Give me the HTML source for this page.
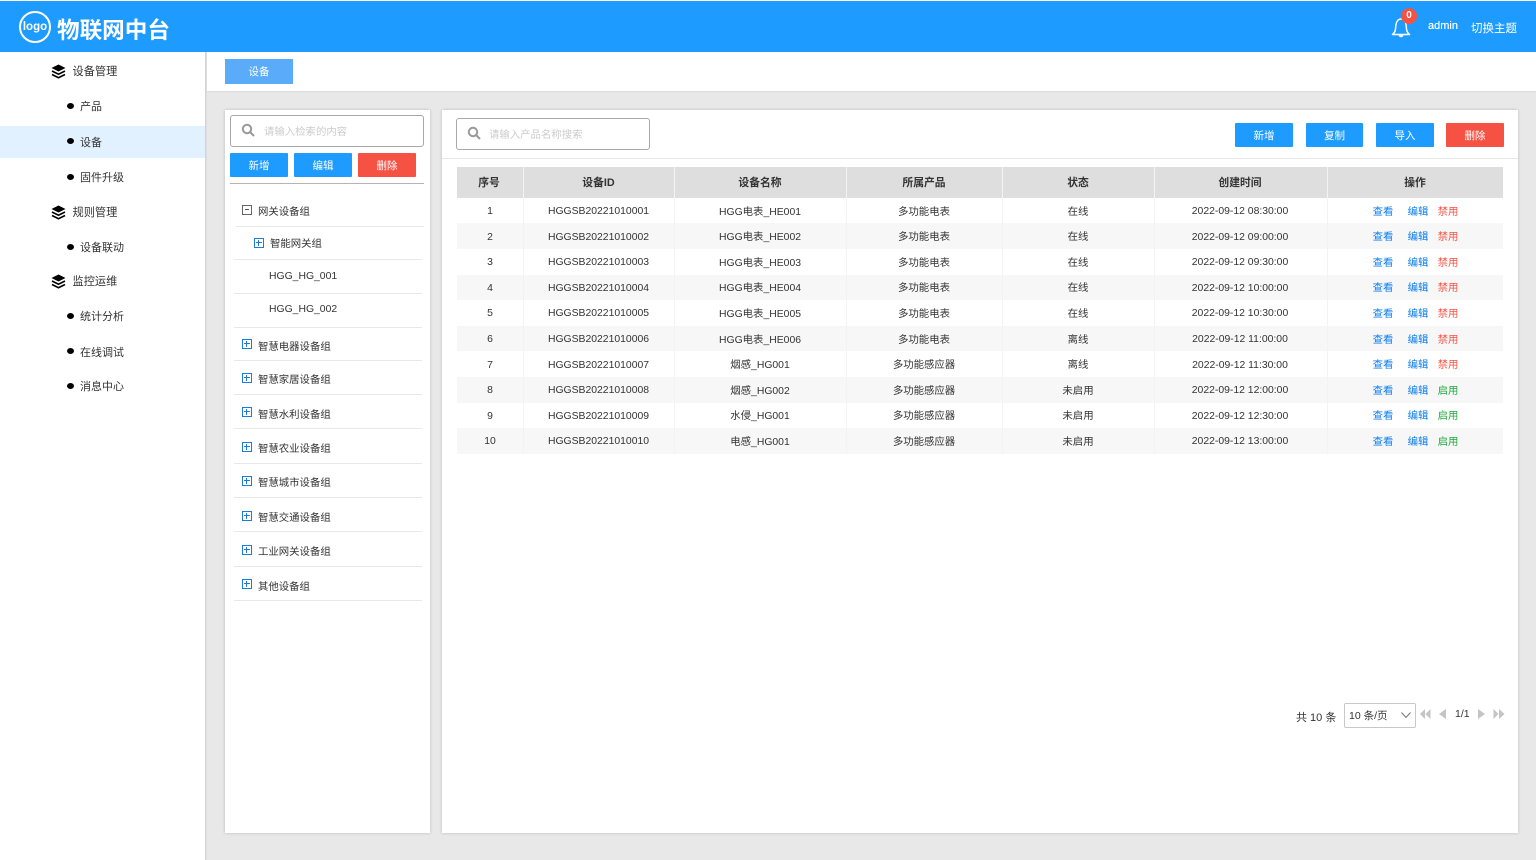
<!DOCTYPE html>
<html lang="zh">
<head>
<meta charset="utf-8">
<style>
*{box-sizing:border-box;margin:0;padding:0}
html,body{width:1536px;height:860px;overflow:hidden;background:#e8e8e8;font-family:"Liberation Sans","Noto Sans CJK SC",sans-serif;color:#333}
.a{position:absolute;white-space:nowrap}
.t{position:absolute;white-space:nowrap;font-size:11px;line-height:14px;color:#333}
.tr{position:absolute;white-space:nowrap;font-size:10.4px;line-height:14px;color:#333;margin-top:1px}
.c{position:absolute;white-space:nowrap;font-size:10.4px;line-height:14px;color:#333;text-align:center;transform:translateX(-50%);margin-top:1px}
.btn{position:absolute;height:24px;line-height:26px;text-align:center;color:#fff;font-size:10.500px;background:#1e9bff;border-radius:1px}
.red{background:#f55243}
.search{position:absolute;height:32px;background:#fff;border:1px solid #a8a8a8;border-radius:3px}
.ph{position:absolute;font-size:10.400px;line-height:14px;color:#ccc;white-space:nowrap;margin-top:1px}
.dot{position:absolute;width:7px;height:6px;border-radius:50%;background:#000}
.line{position:absolute;height:1px;background:#e8e8e8}
.box{position:absolute;width:10px;height:10px;border:1px solid #1e7bdc}
.box:before{content:"";position:absolute;left:1px;right:1px;top:3px;height:1px;background:#1e7bdc}
.box:after{content:"";position:absolute;top:1px;bottom:1px;left:3px;width:1px;background:#1e7bdc}
.row{position:absolute;left:457px;width:1046px}
.hd{position:absolute;top:167px;height:31px;background:#dedede}
.hc{position:absolute;font-size:10.800px;font-weight:bold;line-height:14px;top:176px;color:#333;transform:translateX(-50%);white-space:nowrap}
.vl{position:absolute;width:1px;background:#f3f3f3}
.bl{color:#0a7df0}.rd{color:#f55243}.gr{color:#1fa83c}
</style>
</head>
<body>
<!-- header -->
<div class="a" style="left:0;top:1px;width:1536px;height:51px;background:#1e9bff"></div>
<div class="a" style="left:0;top:0;width:1536px;height:1px;background:#fff"></div>
<div class="a" style="left:19px;top:11px;width:32px;height:32px;border:2px solid #fff;border-radius:50%;color:#fff;font-size:11.500px;font-weight:bold;line-height:28px;text-align:center">logo</div>
<div class="a" style="left:57px;top:16px;font-size:22.600px;line-height:30px;font-weight:bold;color:#fff">物联网中台</div>
<svg class="a" style="left:1390px;top:15px" width="24" height="24" viewBox="0 0 24 24" fill="none" stroke="#fff" stroke-width="1.500"><path d="M2.500 19.500c2.500-2 3-4 3.200-7.500C6 7 8 4 11 4s5 3 5.300 8c.2 3.500.7 5.500 3.200 7.500z" stroke-linejoin="round"/><path d="M8.500 20.300h5c-.4 2.600-4.600 2.600-5 0z" fill="#fff" stroke="none"/></svg>
<div class="a" style="left:1401px;top:8px;width:16px;height:16px;border-radius:50%;background:#f55243;color:#fff;font-size:10px;font-weight:bold;line-height:16px;text-align:center">0</div>
<div class="a" style="left:1428px;top:19px;font-size:11px;line-height:14px;color:#fff;font-weight:500;text-shadow:0 0 .4px #fff">admin</div>
<div class="a" style="left:1471px;top:22px;font-size:11.500px;line-height:14px;color:#fff">切换主题</div>

<!-- sidebar -->
<div class="a" style="left:0;top:52px;width:205px;height:808px;background:#fff"></div>
<div class="a" style="left:205px;top:52px;width:2px;height:808px;background:linear-gradient(to right,#cfcfcf,#e4e4e4)"></div>
<div class="a" style="left:0;top:126px;width:205px;height:32px;background:#e1f1ff"></div>
<svg class="a" style="left:51px;top:64px" width="15" height="15" viewBox="0 0 15 15"><path d="M7.500 0.500L14.500 4 7.500 7.500 .5 4z" fill="#000"/><path d="M1 7l6.500 3.200L14 7M1 10.500l6.500 3.200 6.500-3.200" fill="none" stroke="#000" stroke-width="1.600"/></svg>
<svg class="a" style="left:51px;top:205px" width="15" height="15" viewBox="0 0 15 15"><path d="M7.500 0.500L14.500 4 7.500 7.500 .5 4z" fill="#000"/><path d="M1 7l6.500 3.200L14 7M1 10.500l6.500 3.200 6.500-3.200" fill="none" stroke="#000" stroke-width="1.600"/></svg>
<svg class="a" style="left:51px;top:274px" width="15" height="15" viewBox="0 0 15 15"><path d="M7.500 0.500L14.500 4 7.500 7.500 .5 4z" fill="#000"/><path d="M1 7l6.500 3.200L14 7M1 10.500l6.500 3.200 6.500-3.200" fill="none" stroke="#000" stroke-width="1.600"/></svg>
<div class="t" style="left:72.500px;top:65px;font-size:11.200px">设备管理</div>
<div class="dot" style="left:67px;top:103px"></div><div class="t" style="left:80px;top:100px">产品</div>
<div class="dot" style="left:67px;top:138px"></div><div class="t" style="left:80px;top:136px">设备</div>
<div class="dot" style="left:67px;top:174px"></div><div class="t" style="left:80px;top:171px">固件升级</div>
<div class="t" style="left:72.500px;top:206px;font-size:11.200px">规则管理</div>
<div class="dot" style="left:67px;top:244px"></div><div class="t" style="left:80px;top:241px">设备联动</div>
<div class="t" style="left:72.500px;top:275px;font-size:11.200px">监控运维</div>
<div class="dot" style="left:67px;top:313px"></div><div class="t" style="left:80px;top:310px">统计分析</div>
<div class="dot" style="left:67px;top:348px"></div><div class="t" style="left:80px;top:346px">在线调试</div>
<div class="dot" style="left:67px;top:383px"></div><div class="t" style="left:80px;top:380px">消息中心</div>

<!-- tab bar -->
<div class="a" style="left:207px;top:52px;width:1329px;height:39px;background:#fff;box-shadow:0 1px 1px rgba(0,0,0,.06)"></div>
<div class="a" style="left:225px;top:59px;width:68px;height:25px;background:#5aacfb;color:#fff;font-size:10.500px;line-height:27px;text-align:center">设备</div>

<!-- left panel -->
<div class="a" style="left:225px;top:110px;width:205px;height:723px;background:#fff;box-shadow:0 0 3px rgba(0,0,0,.2)"></div>
<div class="search" style="left:230px;top:115px;width:194px"></div>
<svg class="a" style="left:241px;top:123px" width="14" height="14" viewBox="0 0 14 14" fill="none" stroke="#999" stroke-width="2"><circle cx="6" cy="6" r="4.200"/><path d="M9 9l4 4"/></svg>
<div class="ph" style="left:264px;top:125px">请输入检索的内容</div>
<div class="btn" style="left:230px;top:153px;width:58px;line-height:27px">新增</div>
<div class="btn" style="left:294px;top:153px;width:58px;line-height:27px">编辑</div>
<div class="btn red" style="left:358px;top:153px;width:58px;line-height:27px">删除</div>
<div class="line" style="left:230px;top:183px;width:194px;background:#b4b4b4"></div>

<div class="a" style="left:242px;top:205px;width:10px;height:10px;border:1px solid #666"><div class="a" style="left:2px;top:3px;width:4px;height:1px;background:#555"></div></div>
<div class="tr" style="left:258px;top:205px">网关设备组</div>
<div class="line" style="left:236px;top:226px;width:188px"></div>
<div class="box" style="left:254px;top:238px"></div>
<div class="tr" style="left:270px;top:237px">智能网关组</div>
<div class="line" style="left:234px;top:259px;width:188px"></div>
<div class="tr" style="left:269px;top:269px">HGG_HG_001</div>
<div class="line" style="left:234px;top:293px;width:188px"></div>
<div class="tr" style="left:269px;top:302px">HGG_HG_002</div>
<div class="line" style="left:234px;top:327px;width:188px"></div>
<div class="box" style="left:242px;top:339px"></div><div class="tr" style="left:258px;top:340px">智慧电器设备组</div>
<div class="line" style="left:234px;top:360px;width:188px"></div>
<div class="box" style="left:242px;top:373px"></div><div class="tr" style="left:258px;top:373px">智慧家居设备组</div>
<div class="line" style="left:234px;top:394px;width:188px"></div>
<div class="box" style="left:242px;top:407px"></div><div class="tr" style="left:258px;top:408px">智慧水利设备组</div>
<div class="line" style="left:234px;top:428px;width:188px"></div>
<div class="box" style="left:242px;top:442px"></div><div class="tr" style="left:258px;top:442px">智慧农业设备组</div>
<div class="line" style="left:234px;top:463px;width:188px"></div>
<div class="box" style="left:242px;top:476px"></div><div class="tr" style="left:258px;top:476px">智慧城市设备组</div>
<div class="line" style="left:234px;top:497px;width:188px"></div>
<div class="box" style="left:242px;top:511px"></div><div class="tr" style="left:258px;top:511px">智慧交通设备组</div>
<div class="line" style="left:234px;top:531px;width:188px"></div>
<div class="box" style="left:242px;top:545px"></div><div class="tr" style="left:258px;top:545px">工业网关设备组</div>
<div class="line" style="left:234px;top:566px;width:188px"></div>
<div class="box" style="left:242px;top:579px"></div><div class="tr" style="left:258px;top:580px">其他设备组</div>
<div class="line" style="left:234px;top:600px;width:188px"></div>

<!-- right panel -->
<div class="a" style="left:442px;top:110px;width:1076px;height:723px;background:#fff;box-shadow:0 0 3px rgba(0,0,0,.2)"></div>
<div class="search" style="left:456px;top:118px;width:194px"></div>
<svg class="a" style="left:467px;top:126px" width="14" height="14" viewBox="0 0 14 14" fill="none" stroke="#999" stroke-width="2"><circle cx="6" cy="6" r="4.200"/><path d="M9 9l4 4"/></svg>
<div class="ph" style="left:489px;top:128px">请输入产品名称搜索</div>
<div class="btn" style="left:1235px;top:123px;width:58px">新增</div>
<div class="btn" style="left:1306px;top:123px;width:57px">复制</div>
<div class="btn" style="left:1376px;top:123px;width:58px">导入</div>
<div class="btn red" style="left:1446px;top:123px;width:58px">删除</div>
<div class="line" style="left:442px;top:158px;width:1076px"></div>

<!-- table -->
<div class="hd" style="left:457px;width:1046px"></div>
<div class="row" style="top:223px;height:26px;background:#f7f7f7"></div>
<div class="row" style="top:275px;height:25px;background:#f7f7f7"></div>
<div class="row" style="top:326px;height:25px;background:#f7f7f7"></div>
<div class="row" style="top:377px;height:26px;background:#f7f7f7"></div>
<div class="row" style="top:428px;height:26px;background:#f7f7f7"></div>
<div class="vl" style="left:523px;top:167px;height:287px"></div>
<div class="vl" style="left:674px;top:167px;height:287px"></div>
<div class="vl" style="left:846px;top:167px;height:287px"></div>
<div class="vl" style="left:1002px;top:167px;height:287px"></div>
<div class="vl" style="left:1154px;top:167px;height:287px"></div>
<div class="vl" style="left:1327px;top:167px;height:287px"></div>

<div class="hc" style="left:489px">序号</div>
<div class="hc" style="left:598.500px">设备ID</div>
<div class="hc" style="left:760px">设备名称</div>
<div class="hc" style="left:924px">所属产品</div>
<div class="hc" style="left:1078px">状态</div>
<div class="hc" style="left:1240px">创建时间</div>
<div class="hc" style="left:1415px">操作</div>

<!-- row 1 -->
<div class="c" style="left:490px;top:204px">1</div><div class="c" style="left:598.500px;top:204px">HGGSB20221010001</div><div class="c" style="left:760px;top:205px">HGG电表_HE001</div><div class="c" style="left:924px;top:205px">多功能电表</div><div class="c" style="left:1078px;top:205px">在线</div><div class="c" style="left:1240px;top:204px">2022-09-12 08:30:00</div><div class="c bl" style="left:1383px;top:205px">查看</div><div class="c bl" style="left:1418px;top:205px">编辑</div><div class="c rd" style="left:1448px;top:205px">禁用</div>
<!-- row 2 -->
<div class="c" style="left:490px;top:230px">2</div><div class="c" style="left:598.500px;top:230px">HGGSB20221010002</div><div class="c" style="left:760px;top:230px">HGG电表_HE002</div><div class="c" style="left:924px;top:230px">多功能电表</div><div class="c" style="left:1078px;top:230px">在线</div><div class="c" style="left:1240px;top:230px">2022-09-12 09:00:00</div><div class="c bl" style="left:1383px;top:230px">查看</div><div class="c bl" style="left:1418px;top:230px">编辑</div><div class="c rd" style="left:1448px;top:230px">禁用</div>
<!-- row 3 -->
<div class="c" style="left:490px;top:255px">3</div><div class="c" style="left:598.500px;top:255px">HGGSB20221010003</div><div class="c" style="left:760px;top:256px">HGG电表_HE003</div><div class="c" style="left:924px;top:256px">多功能电表</div><div class="c" style="left:1078px;top:256px">在线</div><div class="c" style="left:1240px;top:255px">2022-09-12 09:30:00</div><div class="c bl" style="left:1383px;top:256px">查看</div><div class="c bl" style="left:1418px;top:256px">编辑</div><div class="c rd" style="left:1448px;top:256px">禁用</div>
<!-- row 4 -->
<div class="c" style="left:490px;top:281px">4</div><div class="c" style="left:598.500px;top:281px">HGGSB20221010004</div><div class="c" style="left:760px;top:281px">HGG电表_HE004</div><div class="c" style="left:924px;top:281px">多功能电表</div><div class="c" style="left:1078px;top:281px">在线</div><div class="c" style="left:1240px;top:281px">2022-09-12 10:00:00</div><div class="c bl" style="left:1383px;top:281px">查看</div><div class="c bl" style="left:1418px;top:281px">编辑</div><div class="c rd" style="left:1448px;top:281px">禁用</div>
<!-- row 5 -->
<div class="c" style="left:490px;top:306px">5</div><div class="c" style="left:598.500px;top:306px">HGGSB20221010005</div><div class="c" style="left:760px;top:307px">HGG电表_HE005</div><div class="c" style="left:924px;top:307px">多功能电表</div><div class="c" style="left:1078px;top:307px">在线</div><div class="c" style="left:1240px;top:306px">2022-09-12 10:30:00</div><div class="c bl" style="left:1383px;top:307px">查看</div><div class="c bl" style="left:1418px;top:307px">编辑</div><div class="c rd" style="left:1448px;top:307px">禁用</div>
<!-- row 6 -->
<div class="c" style="left:490px;top:332px">6</div><div class="c" style="left:598.500px;top:332px">HGGSB20221010006</div><div class="c" style="left:760px;top:333px">HGG电表_HE006</div><div class="c" style="left:924px;top:333px">多功能电表</div><div class="c" style="left:1078px;top:333px">离线</div><div class="c" style="left:1240px;top:332px">2022-09-12 11:00:00</div><div class="c bl" style="left:1383px;top:333px">查看</div><div class="c bl" style="left:1418px;top:333px">编辑</div><div class="c rd" style="left:1448px;top:333px">禁用</div>
<!-- row 7 -->
<div class="c" style="left:490px;top:358px">7</div><div class="c" style="left:598.500px;top:358px">HGGSB20221010007</div><div class="c" style="left:760px;top:358px">烟感_HG001</div><div class="c" style="left:924px;top:358px">多功能感应器</div><div class="c" style="left:1078px;top:358px">离线</div><div class="c" style="left:1240px;top:358px">2022-09-12 11:30:00</div><div class="c bl" style="left:1383px;top:358px">查看</div><div class="c bl" style="left:1418px;top:358px">编辑</div><div class="c rd" style="left:1448px;top:358px">禁用</div>
<!-- row 8 -->
<div class="c" style="left:490px;top:383px">8</div><div class="c" style="left:598.500px;top:383px">HGGSB20221010008</div><div class="c" style="left:760px;top:384px">烟感_HG002</div><div class="c" style="left:924px;top:384px">多功能感应器</div><div class="c" style="left:1078px;top:384px">未启用</div><div class="c" style="left:1240px;top:383px">2022-09-12 12:00:00</div><div class="c bl" style="left:1383px;top:384px">查看</div><div class="c bl" style="left:1418px;top:384px">编辑</div><div class="c gr" style="left:1448px;top:384px">启用</div>
<!-- row 9 -->
<div class="c" style="left:490px;top:409px">9</div><div class="c" style="left:598.500px;top:409px">HGGSB20221010009</div><div class="c" style="left:760px;top:409px">水侵_HG001</div><div class="c" style="left:924px;top:409px">多功能感应器</div><div class="c" style="left:1078px;top:409px">未启用</div><div class="c" style="left:1240px;top:409px">2022-09-12 12:30:00</div><div class="c bl" style="left:1383px;top:409px">查看</div><div class="c bl" style="left:1418px;top:409px">编辑</div><div class="c gr" style="left:1448px;top:409px">启用</div>
<!-- row 10 -->
<div class="c" style="left:490px;top:434px">10</div><div class="c" style="left:598.500px;top:434px">HGGSB20221010010</div><div class="c" style="left:760px;top:435px">电感_HG001</div><div class="c" style="left:924px;top:435px">多功能感应器</div><div class="c" style="left:1078px;top:435px">未启用</div><div class="c" style="left:1240px;top:434px">2022-09-12 13:00:00</div><div class="c bl" style="left:1383px;top:435px">查看</div><div class="c bl" style="left:1418px;top:435px">编辑</div><div class="c gr" style="left:1448px;top:435px">启用</div>

<!-- pagination -->
<div class="t" style="left:1296px;top:711px">共 10 条</div>
<div class="a" style="left:1344px;top:703px;width:72px;height:25px;background:#fff;border:1px solid #c8c8c8;border-radius:2px"></div>
<div class="t" style="left:1349px;top:709px;font-size:10.500px">10 条/页</div>
<svg class="a" style="left:1400px;top:711px" width="12" height="9" viewBox="0 0 12 9" fill="none" stroke="#777" stroke-width="1"><path d="M1.500 1.500L6 6.500l4.500-5"/></svg>
<svg class="a" style="left:1419px;top:708px" width="12" height="12" viewBox="0 0 12 12" fill="#c4c4c4"><path d="M6 1v10L1 6zM11.500 1v10L6.500 6z"/></svg>
<svg class="a" style="left:1438px;top:708px" width="10" height="12" viewBox="0 0 10 12" fill="#c4c4c4"><path d="M8 1v10L1 6z"/></svg>
<div class="t" style="left:1455px;top:707px;font-size:10.500px">1/1</div>
<svg class="a" style="left:1477px;top:708px" width="10" height="12" viewBox="0 0 10 12" fill="#c4c4c4"><path d="M1 1v10l7-5z"/></svg>
<svg class="a" style="left:1493px;top:708px" width="12" height="12" viewBox="0 0 12 12" fill="#c4c4c4"><path d="M0.500 1v10l5-5zM6 1v10l5.500-5z"/></svg>
</body>
</html>
